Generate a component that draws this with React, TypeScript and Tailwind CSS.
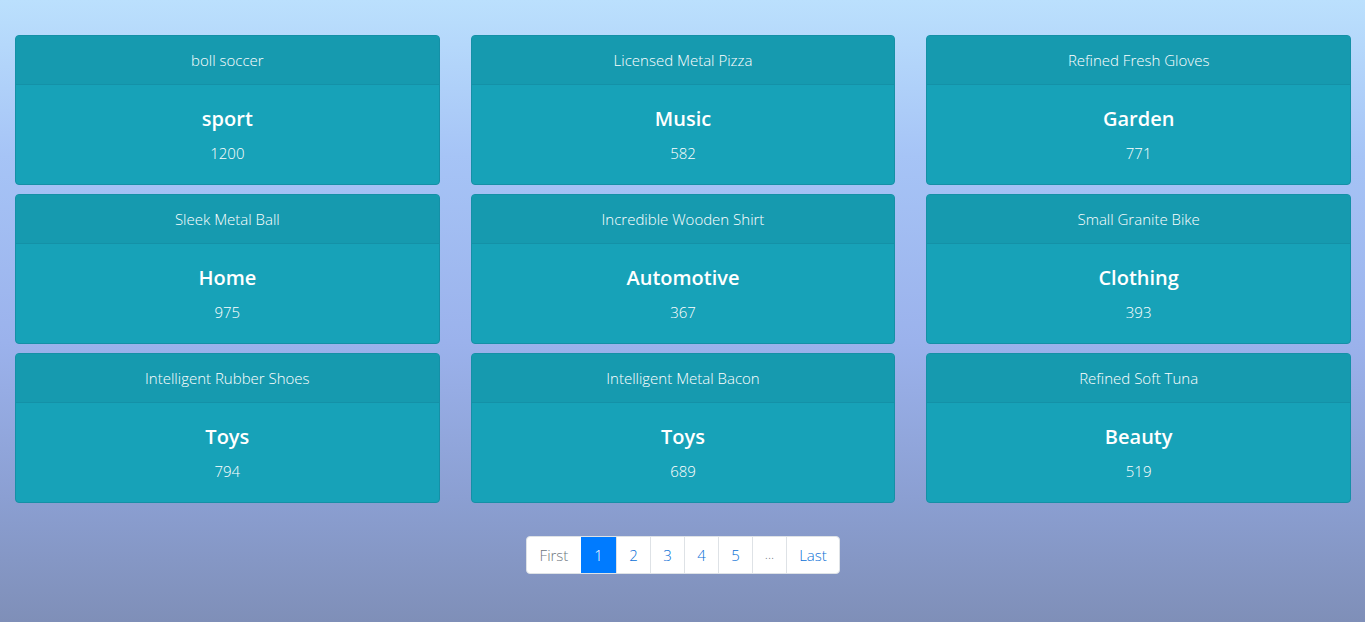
import React from 'react'

const products = [
  { name: 'boll soccer', category: 'sport', price: 1200 },
  { name: 'Licensed Metal Pizza', category: 'Music', price: 582 },
  { name: 'Refined Fresh Gloves', category: 'Garden', price: 771 },
  { name: 'Sleek Metal Ball', category: 'Home', price: 975 },
  { name: 'Incredible Wooden Shirt', category: 'Automotive', price: 367 },
  { name: 'Small Granite Bike', category: 'Clothing', price: 393 },
  { name: 'Intelligent Rubber Shoes', category: 'Toys', price: 794 },
  { name: 'Intelligent Metal Bacon', category: 'Toys', price: 689 },
  { name: 'Refined Soft Tuna', category: 'Beauty', price: 519 },
]

function ProductCard({ name, category, price }: { name: string; category: string; price: number }) {
  return (
    <div className="flex flex-col rounded-[4px] border border-[#1590a6] bg-[#17a2b8] text-white text-center overflow-hidden">
      <div className="h-[49px] flex items-center justify-center bg-[#169aaf] border-b border-[#1491a7] text-[15px] font-light">
        {name}
      </div>
      <div className="h-[99px] flex flex-col items-center pt-[22px]">
        <h5 className="text-[20px] leading-[24px] font-semibold">{category}</h5>
        <p className="mt-[10px] text-[15px] leading-[24px] font-light">{price}</p>
      </div>
    </div>
  )
}

export default function App() {
  const pages = ['1', '2', '3', '4', '5', '...']

  return (
    <div
      className="min-h-[622px] w-full bg-[linear-gradient(180deg,#bbe0fd_0%,#a6c4f6_25%,#9bb2ec_55%,#8b9fd2_80%,#7f8fb8_100%)]"
      style={{ fontFamily: '"Open Sans", "Noto Sans", sans-serif' }}
    >
      <div className="pl-[15px] pr-[14px] pt-[35px]">
        <div className="grid grid-cols-3 gap-x-[31px] gap-y-[9px]">
          {products.map(p => (
            <ProductCard key={p.name} {...p} />
          ))}
        </div>
        <div className="flex justify-center mt-[33px]">
          <div className="flex h-[38px] text-[15px] rounded-[4px] overflow-hidden border border-[#dee2e6] bg-white">
            <span className="w-[54px] flex items-center justify-center text-[#6c757d] font-light">First</span>
            {pages.map(pg => (
              <span
                key={pg}
                className={
                  pg === '1'
                    ? 'w-[35px] flex items-center justify-center bg-[#007bff] text-white font-light'
                    : 'w-[34px] flex items-center justify-center border-l border-[#dee2e6] text-[#0a6fd6] font-light'
                }
              >
                {pg === '...' ? <span className="text-[#6c757d] text-[13px]">...</span> : pg}
              </span>
            ))}
            <span className="w-[53px] flex items-center justify-center border-l border-[#dee2e6] text-[#0a6fd6] font-light">Last</span>
          </div>
        </div>
      </div>
    </div>
  )
}
